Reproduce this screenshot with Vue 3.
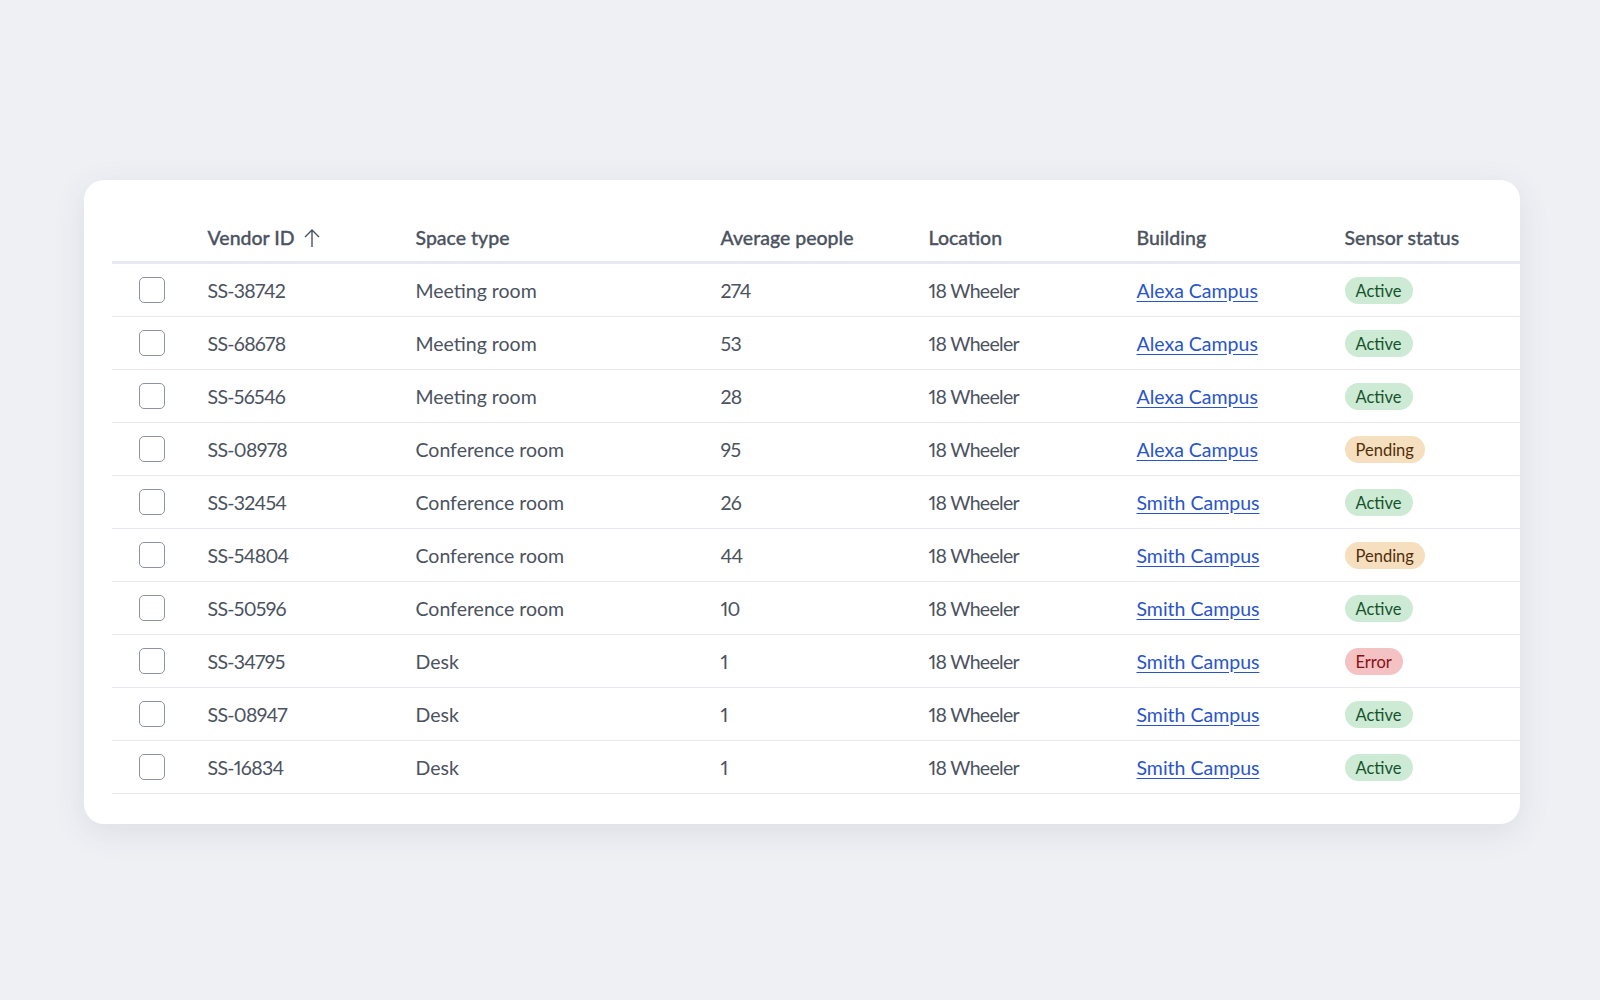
<template>
  <div class="page">
    <div class="card">
      <table class="spaces">
        <colgroup>
          <col class="col-check" />
          <col class="col-id" />
          <col class="col-type" />
          <col class="col-people" />
          <col class="col-location" />
          <col class="col-building" />
          <col />
        </colgroup>
        <thead>
          <tr>
            <th></th>
            <th>
              <span class="sort-head">
                Vendor ID
                <svg class="sort-icon" viewBox="0 0 18 20" width="18" height="20" fill="none" stroke="currentColor" stroke-width="1.4">
                  <path d="M9 19V2M2 9l7-7 7 7" />
                </svg>
              </span>
            </th>
            <th>Space type</th>
            <th>Average people</th>
            <th>Location</th>
            <th>Building</th>
            <th>Sensor status</th>
          </tr>
        </thead>
        <tbody>
          <tr v-for="row in rows" :key="row.id">
            <td class="check-cell"><span class="checkbox"></span></td>
            <td class="tight">{{ row.id }}</td>
            <td>{{ row.type }}</td>
            <td class="tight">{{ row.people }}</td>
            <td class="tight">18 Wheeler</td>
            <td><a class="link" href="#" @click.prevent>{{ row.building }}</a></td>
            <td><span class="badge" :class="row.status.toLowerCase()">{{ row.status }}</span></td>
          </tr>
        </tbody>
      </table>
    </div>
  </div>
</template>

<script setup>
const rows = [
  { id: "SS-38742", type: "Meeting room", people: 274, building: "Alexa Campus", status: "Active" },
  { id: "SS-68678", type: "Meeting room", people: 53, building: "Alexa Campus", status: "Active" },
  { id: "SS-56546", type: "Meeting room", people: 28, building: "Alexa Campus", status: "Active" },
  { id: "SS-08978", type: "Conference room", people: 95, building: "Alexa Campus", status: "Pending" },
  { id: "SS-32454", type: "Conference room", people: 26, building: "Smith Campus", status: "Active" },
  { id: "SS-54804", type: "Conference room", people: 44, building: "Smith Campus", status: "Pending" },
  { id: "SS-50596", type: "Conference room", people: 10, building: "Smith Campus", status: "Active" },
  { id: "SS-34795", type: "Desk", people: 1, building: "Smith Campus", status: "Error" },
  { id: "SS-08947", type: "Desk", people: 1, building: "Smith Campus", status: "Active" },
  { id: "SS-16834", type: "Desk", people: 1, building: "Smith Campus", status: "Active" },
];
</script>

<style>
body {
  margin: 0;
  background: #eef0f4;
}
</style>

<style scoped>
.page {
  height: 1000px;
  box-sizing: border-box;
  padding: 180px 80px 0 84px;
  font-family: "Lato", "Open Sans", sans-serif;
}

.card {
  height: 644px;
  box-sizing: border-box;
  padding: 30px 0 0 28px;
  background: #fff;
  border-radius: 20px;
  box-shadow: 0 8px 32px rgba(60, 70, 100, 0.1);
}

.spaces {
  width: 100%;
  table-layout: fixed;
  border-collapse: collapse;
  font-size: 19.5px;
  font-variant-numeric: proportional-nums;
  color: #4b5260;
}

.col-check { width: 95.5px; }
.col-id { width: 208px; }
.col-type { width: 305px; }
.col-people { width: 208px; }
.col-location { width: 208px; }
.col-building { width: 208px; }

th {
  height: 47px;
  padding: 4px 0 0;
  text-align: left;
  font-weight: 500;
  -webkit-text-stroke: 0.3px #4b5260;
  color: #4b5260;
  border-bottom: 3px solid #e6e9f1;
}

td {
  height: 52px;
  padding: 0;
  border-bottom: 1px solid #e6e9f1;
}

.tight {
  letter-spacing: -0.7px;
}

.sort-head {
  display: inline-flex;
  align-items: center;
  gap: 8px;
}

.sort-icon {
  color: #4b5260;
}

.check-cell {
  padding-left: 26.5px;
}

.checkbox {
  display: block;
  width: 24px;
  height: 24px;
  border: 1.5px solid #8b93a5;
  border-radius: 5px;
}

.link {
  color: #2a55c9;
  text-decoration: underline;
  text-underline-offset: 3px;
}

.badge {
  display: inline-block;
  height: 27px;
  line-height: 28px;
  padding: 0 11px;
  border-radius: 14px;
  font-size: 16.5px;
}

.active {
  background: #cdead4;
  color: #14532d;
}

.pending {
  background: #f6dfbe;
  color: #4f2e0c;
}

.error {
  background: #f4c2c2;
  color: #8b0f16;
}
</style>
